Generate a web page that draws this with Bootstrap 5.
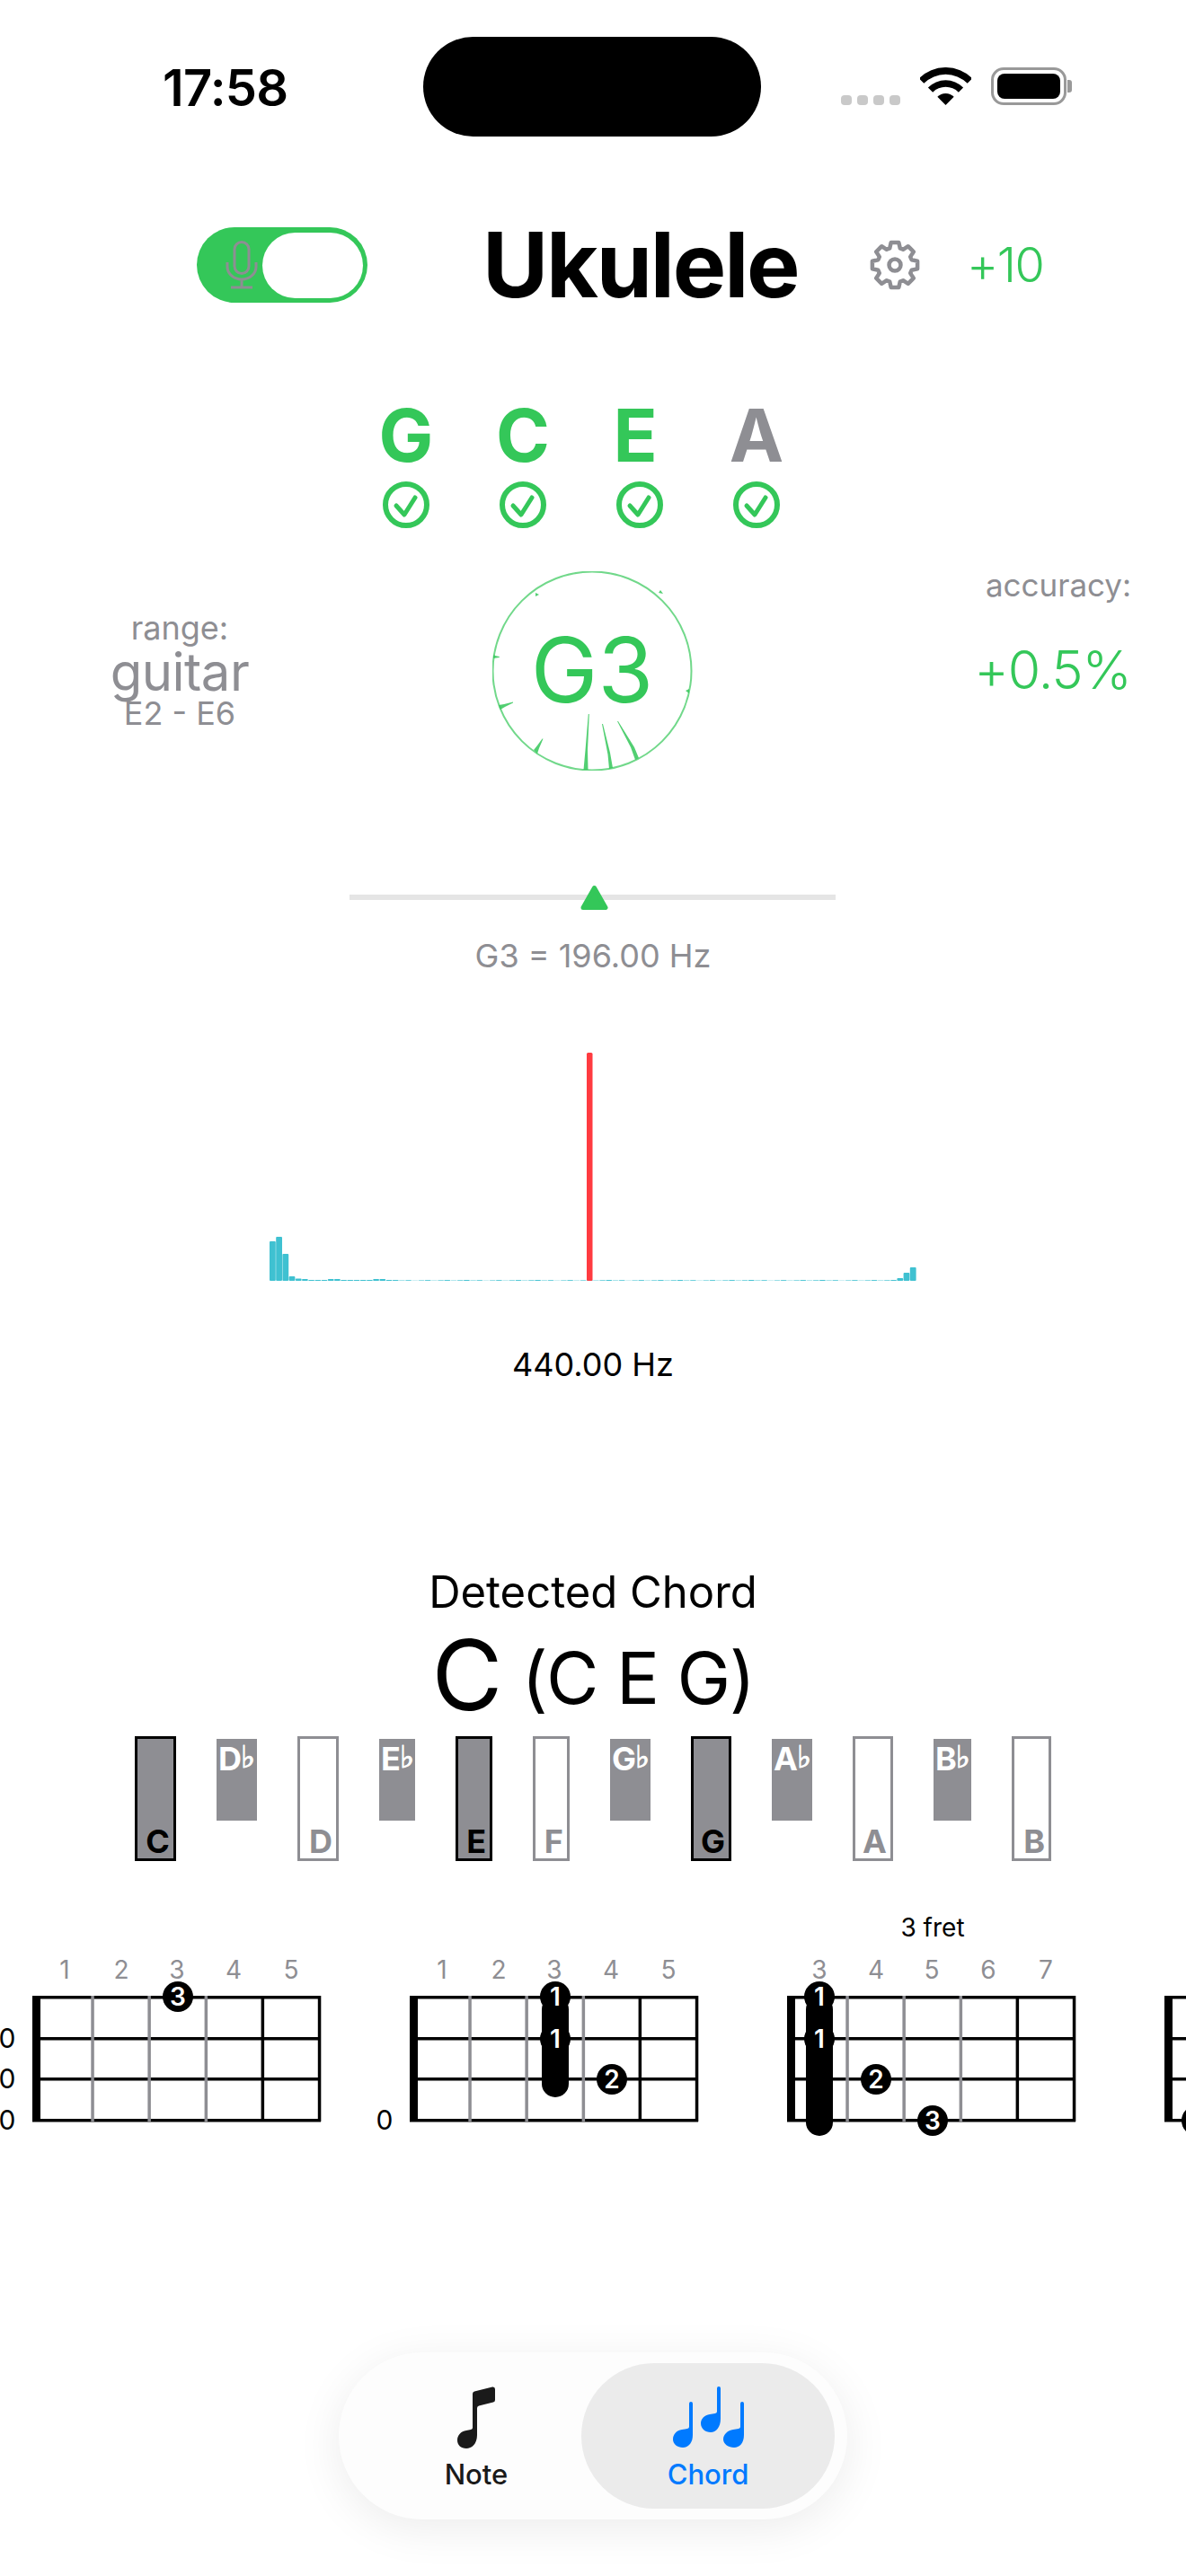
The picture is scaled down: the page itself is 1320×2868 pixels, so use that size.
<!DOCTYPE html>
<html lang="en">
<head>
    <meta charset="UTF-8">
    <title>Ukulele Tuner</title>
    <meta name="viewport" content="width=device-width, initial-scale=1">
    <link href="https://cdn.jsdelivr.net/npm/bootstrap@5.3.0/dist/css/bootstrap.min.css" rel="stylesheet">
    <style>
        body { width: 1320px; height: 2868px; overflow: hidden; background: #fff; color: #000; font-family: Inter, "Liberation Sans", sans-serif; }
        .tuner-green { color: #34c759; }
        .tuner-gray { color: #8e8e93; }

        .status-strip { height: 152px; padding-top: 41px; }
        .status-time { width: 471px; padding-left: 181px; padding-top: 29px; font-size: 56px; line-height: 56px; font-weight: 600; letter-spacing: -.7px; }
        .island { width: 376px; height: 111px; background: #000; border-radius: 56px; }
        .status-icons { padding: 34px 0 0 89px; height: 76px; gap: 22px; }
        .signal-dots { gap: 6px; padding-top: 31px; }
        .signal-dots span { width: 12px; height: 11px; border-radius: 4px; background: #c9c9c9; }
        .battery { width: 84px; height: 42px; border: 3px solid #999; border-radius: 14px; padding: 4px; }
        .battery span { display: block; height: 100%; background: #000; border-radius: 8px; }
        .battery-nub { width: 5px; height: 14px; background: #999; border-radius: 0 3px 3px 0; margin: 14px 0 0 -21px; }

        .top-row { margin-top: 101px; height: 84px; padding-left: 219px; }
        .mic-toggle { width: 190px; height: 84px; background: #34c759; border-radius: 42px; flex: none; }
        .mic-knob { position: absolute; left: 73px; top: 6px; width: 112px; height: 73px; background: #fff; border-radius: 37px; }
        .mic-glyph { position: absolute; left: 32px; top: 15px; }
        .app-title { width: 350px; margin-left: 128px; font-size: 100px; line-height: 84px; font-weight: 700; letter-spacing: -2.2px; white-space: nowrap; }
        .gear-wrap { margin-left: 81px; width: 56px; height: 56px; }
        .offset-value { margin-left: 52px; font-size: 54px; line-height: 84px; font-weight: 300; letter-spacing: -1.5px; }

        .string-row { margin-top: 108px; padding-left: 387px; }
        .string-col { width: 130px; text-align: center; }
        .string-note { font-size: 81px; line-height: 81px; font-weight: 700; }
        .string-check { display: block; margin: 10px auto 0; }
        .note-e { padding-right: 10px; }

        .reading-row { margin-top: 48px; height: 222px; }
        .side-left { width: 400px; text-align: center; padding-top: 43px; }
        .side-mid { width: 520px; }
        .side-right { width: 400px; text-align: center; padding: 0 0 0 110px; }
        .range-label { font-size: 36px; line-height: 40px; }
        .range-name { font-size: 58px; line-height: 52px; letter-spacing: -.5px; padding-top: 3px; }
        .range-span { font-size: 36px; line-height: 40px; }
        .accuracy-label { font-size: 35px; line-height: 40px; margin-top: -5px; padding-left: 6px; }
        .accuracy-value { font-size: 59px; line-height: 70px; font-weight: 300; margin-top: 40px; padding-right: 7px; letter-spacing: -1px; }
        .dial-note { font-size: 100px; font-weight: 400; fill: #34c759; font-family: Inter, sans-serif; }

        .pitch-track { width: 541px; height: 6px; margin: 138px 0 0 389px; background: #e5e5e5; }
        .pitch-pointer { position: absolute; left: 257px; top: -11px; }
        .pitch-caption { margin-top: 42px; font-size: 36px; line-height: 40px; text-align: center; }

        .spectrum { display: block; margin: 88px 0 0 300px; }
        .peak-caption { margin-top: 71px; font-size: 36px; line-height: 40px; text-align: center; }

        .chord-heading { margin-top: 206px; font-size: 49px; line-height: 56px; text-align: center; }
        .chord-name { margin-top: 14px; height: 100px; gap: 21px; }
        .chord-root { font-size: 108px; line-height: 100px; }
        .chord-notes { font-size: 80px; line-height: 100px; letter-spacing: -1.5px; padding-top: 3px; }

        .key-row { margin-top: 18px; padding-left: 150px; gap: 45px; height: 139px; }
        .piano-key { flex: none; font-size: 36px; line-height: 36px; font-weight: 700; }
        .key-natural { height: 139px; border: 3px solid #8e8e93; color: #8e8e93; background: #fff; text-align: right; padding: 96px 4px 0 0; }
        .key-flat { height: 91px; margin-top: 3px; background: #8e8e93; color: #fff; padding: 4px 0 0 2px; white-space: nowrap; letter-spacing: -1px; }
        .key-active { border-color: #000; color: #000; background: #8e8e93; }
        .flat-sign { font-family: "DejaVu Sans", sans-serif; font-size: 34px; line-height: 20px; font-weight: 700; vertical-align: 3px; margin-left: 0; -webkit-text-stroke: 1px #fff; }

        .fret-strip { margin-top: 48px; height: 260px; overflow: hidden; }
        .fret-chart { flex: none; display: block; }
        .fret-chart text { font-family: Inter, sans-serif; }
        .fret-num { font-size: 28px; fill: #8e8e93; text-anchor: middle; }
        .open-num { font-size: 30px; fill: #000; text-anchor: middle; }
        .dot-num { font-size: 28px; fill: #fff; text-anchor: middle; font-weight: 600; }
        .fret-label { font-size: 28px; fill: #000; text-anchor: middle; }

        .tab-pill { position: absolute; left: 377px; top: 2619px; width: 566px; height: 186px; border-radius: 93px; background: #fdfdfd; box-shadow: 0 10px 50px rgba(0,0,0,.08); padding: 12px; }
        .tab-item { height: 162px; border-radius: 81px; font-size: 31px; line-height: 30px; font-weight: 500; }
        .tab-note { width: 258px; color: #1a1a1a; padding: 26px 0 0 24px; }
        .tab-chord { width: 282px; color: #007aff; background: #ebebeb; padding-top: 26px; }
        .tab-item svg { display: block; margin: 0 auto 13px; }
    </style>
</head>
<body>

<div class="status-strip d-flex">
    <div class="status-time">17:58</div>
    <div class="island"></div>
    <div class="status-icons d-flex">
        <div class="signal-dots d-flex"><span></span><span></span><span></span><span></span></div>
        <svg width="57" height="42" viewBox="0 0 57 42"><path d="M-1.2 12.3A42 42 0 0 1 58.2 12.3L52.7 17.8A34.3 34.3 0 0 0 4.3 17.8Z"/><path d="M8.9 22.4A27.7 27.7 0 0 1 48.1 22.4L42.85 27.65A20.3 20.3 0 0 0 14.15 27.65Z"/><path d="M28.5 42L19.3 32.8A13 13 0 0 1 37.7 32.8Z"/></svg>
        <div class="battery"><span></span></div>
        <div class="battery-nub"></div>
    </div>
</div>

<div class="top-row d-flex align-items-center">
    <div class="mic-toggle position-relative">
        <svg class="mic-glyph" width="36" height="54" viewBox="0 0 36 54" fill="none" stroke="#8e8e93" stroke-width="3"><rect x="10" y="1.5" width="16" height="35" rx="8"/><path d="M2 24v5a16 14 0 0 0 32 0v-5M18 43v8M6 52h24"/></svg>
        <div class="mic-knob"></div>
    </div>
    <div class="app-title">Ukulele</div>
    <div class="gear-wrap"><svg width="56" height="56" viewBox="-28 -28 56 56" fill="none" stroke="#8e8e93" stroke-width="4.5" stroke-linejoin="round"><path id="gearOutline"/><circle r="6.5"/></svg></div>
    <div class="offset-value tuner-green">+10</div>
</div>

<div class="string-row d-flex tuner-green">
    <div class="string-col"><div class="string-note">G</div><svg class="string-check" width="52" height="52" viewBox="-26 -26 52 52" fill="none" stroke="#34c759"><circle r="23" stroke-width="6"/><path d="M-11 1L-2 11L10-8" stroke-width="5" stroke-linecap="round" stroke-linejoin="round"/></svg></div>
    <div class="string-col"><div class="string-note">C</div><svg class="string-check" width="52" height="52" viewBox="-26 -26 52 52" fill="none" stroke="#34c759"><circle r="23" stroke-width="6"/><path d="M-11 1L-2 11L10-8" stroke-width="5" stroke-linecap="round" stroke-linejoin="round"/></svg></div>
    <div class="string-col"><div class="string-note note-e">E</div><svg class="string-check" width="52" height="52" viewBox="-26 -26 52 52" fill="none" stroke="#34c759"><circle r="23" stroke-width="6"/><path d="M-11 1L-2 11L10-8" stroke-width="5" stroke-linecap="round" stroke-linejoin="round"/></svg></div>
    <div class="string-col"><div class="string-note tuner-gray">A</div><svg class="string-check" width="52" height="52" viewBox="-26 -26 52 52" fill="none" stroke="#34c759"><circle r="23" stroke-width="6"/><path d="M-11 1L-2 11L10-8" stroke-width="5" stroke-linecap="round" stroke-linejoin="round"/></svg></div>
</div>

<div class="reading-row d-flex">
    <div class="side-left tuner-gray">
        <div class="range-label">range:</div>
        <div class="range-name">guitar</div>
        <div class="range-span">E2 - E6</div>
    </div>
    <div class="side-mid d-flex justify-content-center">
        <svg width="224" height="222" viewBox="549 636 224 222">
            <circle cx="660" cy="747" r="110.5" fill="none" stroke="#34c759" stroke-opacity=".7" stroke-width="2"/>
            <g fill="#34c759" fill-opacity=".85">
                <path d="M650.5 857L652.5 835L655.8 795H656.8L655 835L655.5 857Z"/>
                <path d="M679 856L677.5 840L671 806H672L680 838L683 855Z"/>
                <path d="M708 846L703 832L688 803H689L707 832L712 844Z"/>
                <path d="M595 835L599 830L604.5 822.5H605.5L601 833L599 839Z"/>
                <path d="M556 785L562 784L572 781.5V782.5L563 787L558 790Z"/>
                <path d="M550 729.5L556.8 731V732L550 733Z"/>
                <path d="M736 657L739 661L734 660Z"/>
                <path d="M768 767L764 769L768 772Z"/>
                <path d="M597 664L601 662L597 660Z"/>
            </g>
            <text class="dial-note" x="660" y="782" text-anchor="middle">G3</text>
        </svg>
    </div>
    <div class="side-right tuner-gray">
        <div class="accuracy-label">accuracy:</div>
        <div class="accuracy-value tuner-green">+0.5%</div>
    </div>
</div>

<div class="pitch-track position-relative">
    <svg class="pitch-pointer" width="31" height="28" viewBox="0 0 31 28"><path d="M15.5 3.5L28 25.5H3Z" fill="#34c759" stroke="#34c759" stroke-width="5" stroke-linejoin="round"/></svg>
</div>
<div class="pitch-caption tuner-gray">G3 = 196.00 Hz</div>

<svg class="spectrum" id="spectrum" width="722" height="256" viewBox="0 0 722 256"></svg>
<div class="peak-caption">440.00 Hz</div>

<div class="chord-heading">Detected Chord</div>
<div class="chord-name d-flex justify-content-center">
    <div class="chord-root">C</div>
    <div class="chord-notes">(C E G)</div>
</div>

<div class="key-row d-flex">
    <div class="piano-key key-natural key-active" style="width:46px">C</div>
    <div class="piano-key key-flat" style="width:45px">D<span class="flat-sign">♭</span></div>
    <div class="piano-key key-natural" style="width:46px">D</div>
    <div class="piano-key key-flat" style="width:40px">E<span class="flat-sign">♭</span></div>
    <div class="piano-key key-natural key-active" style="width:41px">E</div>
    <div class="piano-key key-natural" style="width:41px">F</div>
    <div class="piano-key key-flat" style="width:45px">G<span class="flat-sign">♭</span></div>
    <div class="piano-key key-natural key-active" style="width:45px">G</div>
    <div class="piano-key key-flat" style="width:45px">A<span class="flat-sign">♭</span></div>
    <div class="piano-key key-natural" style="width:45px">A</div>
    <div class="piano-key key-flat" style="width:42px">B<span class="flat-sign">♭</span></div>
    <div class="piano-key key-natural" style="width:44px">B</div>
</div>

<div class="fret-strip d-flex" id="fretStrip"></div>

<div class="tab-pill d-flex">
    <div class="tab-item tab-note text-center">
        <svg width="42" height="70" viewBox="0 0 42 70" fill="#1a1a1a"><path d="M17 8Q17 6 19 5.5L39 .5Q42 0 42 3V15Q42 17 40 17.5L24 21.5Q22 22 22 24V54C22 64 16 69 10 69C4 69 0 65 0 60C0 54 4 50 10 49L15 48Q17 47.5 17 46Z"/></svg>
        Note
    </div>
    <div class="tab-item tab-chord text-center">
        <svg width="79" height="70" viewBox="0 0 79 70" fill="#007aff"><path d="M18 19Q18 17 20 17T22 19V54C22 63 17 68 11 68C5 68 0 64 0 59C0 53 4 49 10 48L16 47Q18 46.5 18 45Z"/><path d="M49 2Q49 0 51 0T53 2V36C53 45 48 51 42 51C36 51 31 47 31 41C31 36 35 32 41 31L47 30Q49 29.5 49 28Z"/><path d="M75 19Q75 17 77 17T79 19V54C79 63 74 68 68 68C62 68 56 64 56 59C56 53 61 49 67 48L73 47Q75 46.5 75 45Z"/></svg>
        Chord
    </div>
</div>

<script>
// gear outline, 8 teeth
var gearD = '';
for (var k = 0; k < 8; k++) {
    var a = k * Math.PI / 4 - Math.PI / 2;
    [[19.5, -.30], [25.5, -.17], [25.5, .17], [19.5, .30]].forEach(function (p, i) {
        var x = (p[0] * Math.cos(a + p[1])).toFixed(1), y = (p[0] * Math.sin(a + p[1])).toFixed(1);
        gearD += (k === 0 && i === 0 ? 'M' : 'L') + x + ' ' + y;
    });
}
document.getElementById('gearOutline').setAttribute('d', gearD + 'Z');

// spectrum bars, pitch 7.2
var heights = [44, 49, 30, 5, 2.5, 2, 1, 1, 1, 2, 2, 1, 1, 1, 1, 1, 2, 2, 1];
var svgBars = '';
for (var i = 0; i < 100; i++) {
    var h = i < heights.length ? heights[i] : (i > 96 ? [3, 9, 15][i - 97] : 1);
    var op = i < 19 || i > 96 ? 1 : .25 + ((i * 37) % 11) / 14;
    svgBars += '<rect x="' + (i * 7.2).toFixed(1) + '" y="' + (254 - h) + '" width="6.8" height="' + h + '" rx="1" fill="#3fc1d1" fill-opacity="' + op.toFixed(2) + '"/>';
}
svgBars += '<rect x="353" y="0" width="6.5" height="254" rx="1.5" fill="#ff3b40"/>';
document.getElementById('spectrum').innerHTML = svgBars;

// fret charts: dots are [fret position, string, finger], finger 0 has no label
var charts = [
    { frets: [1, 2, 3, 4, 5], open: [1, 2, 3], barre: null, dots: [[2.5, 0, 3]] },
    { frets: [1, 2, 3, 4, 5], open: [3], barre: [183, 113], dots: [[2.5, 0, 1], [2.5, 1, 1], [3.5, 2, 2]] },
    { frets: [3, 4, 5, 6, 7], open: [], label: '3 fret', barre: [57, 156], dots: [[.5, 0, 1], [.5, 1, 1], [1.5, 2, 2], [2.5, 3, 3]] },
    { frets: [], open: [], barre: null, dots: [[.5, 3, 0]] }
];
var fretNumX = [72, 135, 197, 260, 324], rowY = [0, 47, 92, 138];
var strip = '';
charts.forEach(function (c) {
    var s = '<svg class="fret-chart" width="420" height="260" viewBox="0 2120 420 260">';
    if (c.label) s += '<text class="fret-label" x="198" y="2156">' + c.label + '</text>';
    c.frets.forEach(function (f, i) { s += '<text class="fret-num" x="' + fretNumX[i] + '" y="2203">' + f + '</text>'; });
    c.open.forEach(function (r) { s += '<text class="open-num" x="8" y="' + (2222 + rowY[r] + 11) + '">0</text>'; });
    rowY.forEach(function (y) { s += '<rect x="36" y="' + (2222 + y - (y ? 1 : 0)) + '" width="321" height="3.5" fill="#000"/>'; });
    [1, 2, 3, 4, 5].forEach(function (n) {
        s += '<rect x="' + (40 + n * 63.1 - 1.75).toFixed(1) + '" y="2222" width="3.5" height="140" fill="' + (n < 4 ? '#8e8e93' : '#000') + '"/>';
    });
    s += '<rect x="36" y="2222" width="9" height="140" fill="#000"/>';
    if (c.barre) s += '<rect x="' + c.barre[0] + '" y="2222" width="30" height="' + c.barre[1] + '" rx="15" fill="#000"/>';
    c.dots.forEach(function (d) {
        var cx = 72 + (d[0] - .5) * 63, cy = 2223 + rowY[d[1]];
        s += '<circle cx="' + cx + '" cy="' + cy + '" r="17" fill="#000"/>';
        if (d[2]) s += '<text class="dot-num" x="' + cx + '" y="' + (cy + 10) + '">' + d[2] + '</text>';
    });
    strip += s + '</svg>';
});
document.getElementById('fretStrip').innerHTML = strip;
</script>
<script src="https://cdn.jsdelivr.net/npm/bootstrap@5.3.0/dist/js/bootstrap.bundle.min.js"></script>
</body>
</html>
